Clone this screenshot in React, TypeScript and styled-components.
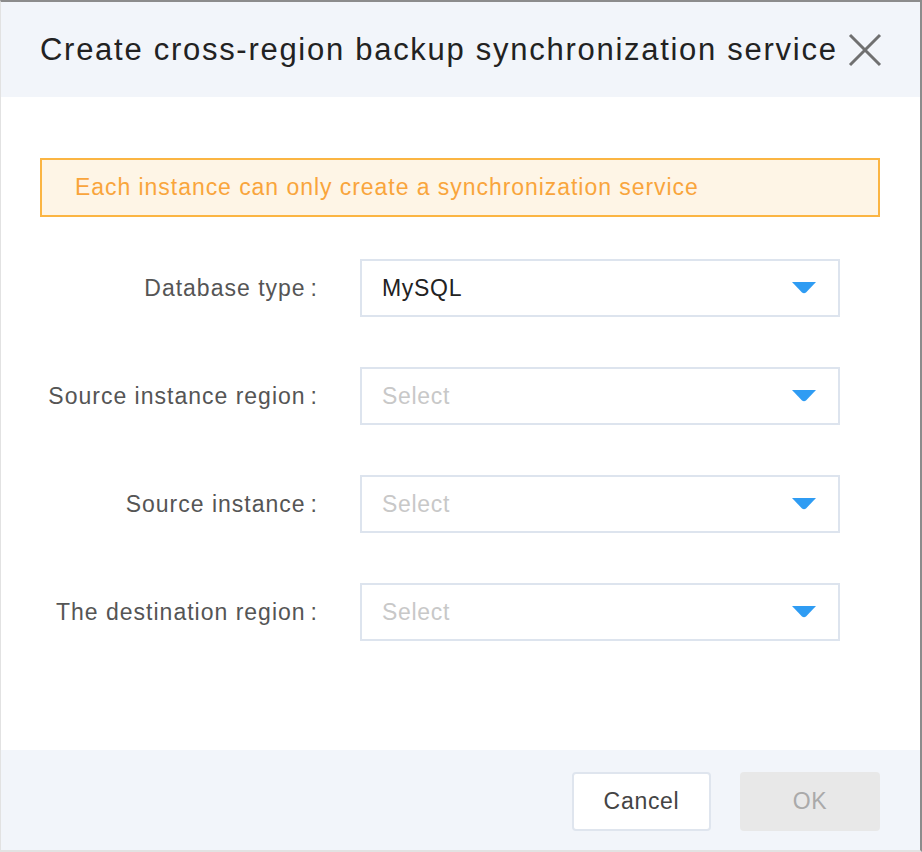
import React from "react";
import styled, { createGlobalStyle } from "styled-components";

const GlobalStyle = createGlobalStyle`
  html, body { margin: 0; padding: 0; background: #ffffff; }
  body { font-family: "Liberation Sans", Arial, sans-serif; }
  * { box-sizing: border-box; }
`;

const Dialog = styled.div`
  width: 922px;
  height: 852px;
  display: flex;
  flex-direction: column;
  background: #ffffff;
  border-top: 2px solid #8c8c8c;
  border-right: 2px solid #8c8c8c;
  border-left: 1px solid #e2e2e2;
  border-bottom: 2px solid #e2e2e2;
`;

const Header = styled.div`
  height: 95px;
  flex: none;
  background: #f2f5fa;
  display: flex;
  align-items: center;
  justify-content: space-between;
  padding: 0 38px 0 39px;
`;

const Title = styled.h1`
  margin: 0;
  font-size: 31px;
  font-weight: 400;
  color: #222;
  letter-spacing: 1.72px;
  white-space: nowrap;
`;

const CloseButton = styled.button`
  border: none;
  background: transparent;
  padding: 0;
  width: 34px;
  height: 34px;
  display: flex;
  align-items: center;
  justify-content: center;
  cursor: pointer;
`;

const Body = styled.div`
  flex: 1;
  padding: 61px 40px 0 39px;
  display: flex;
  flex-direction: column;
`;

const Alert = styled.div`
  height: 59px;
  border: 2px solid #fbb543;
  background: #fef5e6;
  color: #f9a53c;
  font-size: 23px;
  letter-spacing: 0.95px;
  display: flex;
  align-items: center;
  padding-left: 33px;
`;

const Form = styled.div`
  margin-top: 42px;
  display: flex;
  flex-direction: column;
  gap: 50px;
`;

const Row = styled.div`
  display: flex;
  align-items: center;
  height: 58px;
`;

const Label = styled.label`
  width: 278px;
  text-align: right;
  font-size: 23px;
  letter-spacing: 1px;
  color: #555;
  margin-right: 42px;
  white-space: nowrap;
`;

const Colon = styled.span`
  margin-left: 5px;
`;

const Select = styled.div<{ $placeholder?: boolean }>`
  width: 480px;
  height: 58px;
  border: 2px solid #dde4ee;
  display: flex;
  align-items: center;
  justify-content: space-between;
  padding: 0 22px 0 20px;
  font-size: 23px;
  letter-spacing: 0.7px;
  color: ${(p) => (p.$placeholder ? "#c8c8c8" : "#222")};
`;

const Footer = styled.div`
  height: 100px;
  flex: none;
  background: #f2f5fa;
  display: flex;
  align-items: flex-start;
  justify-content: flex-end;
  gap: 29px;
  padding: 22px 40px 0 0;
`;

const Button = styled.button<{ $disabled?: boolean }>`
  width: ${(p) => (p.$disabled ? "140px" : "139px")};
  height: 59px;
  border-radius: 4px;
  font-family: inherit;
  font-size: 23px;
  letter-spacing: 0.7px;
  border: ${(p) => (p.$disabled ? "none" : "2px solid #dfe5ee")};
  background: ${(p) => (p.$disabled ? "#e8e8e8" : "#ffffff")};
  color: ${(p) => (p.$disabled ? "#aaaaaa" : "#444")};
`;

const Caret = () => (
  <svg width="24" height="12" viewBox="0 0 24 12">
    <path d="M0 0 H24 L14 10.5 Q12 12 10 10.5 Z" fill="#2f9cf3" />
  </svg>
);

const fields = [
  { label: "Database type", value: "MySQL", placeholder: false },
  { label: "Source instance region", value: "Select", placeholder: true },
  { label: "Source instance", value: "Select", placeholder: true },
  { label: "The destination region", value: "Select", placeholder: true },
];

export default function App() {
  return (
    <>
      <GlobalStyle />
      <Dialog>
        <Header>
          <Title>Create cross-region backup synchronization service</Title>
          <CloseButton aria-label="close">
            <svg width="34" height="34" viewBox="0 0 34 34">
              <path d="M2 2 L32 32 M32 2 L2 32" stroke="#707070" strokeWidth="3" />
            </svg>
          </CloseButton>
        </Header>
        <Body>
          <Alert>Each instance can only create a synchronization service</Alert>
          <Form>
            {fields.map((f) => (
              <Row key={f.label}>
                <Label>
                  {f.label}
                  <Colon>:</Colon>
                </Label>
                <Select $placeholder={f.placeholder}>
                  <span>{f.value}</span>
                  <Caret />
                </Select>
              </Row>
            ))}
          </Form>
        </Body>
        <Footer>
          <Button>Cancel</Button>
          <Button $disabled>OK</Button>
        </Footer>
      </Dialog>
    </>
  );
}
